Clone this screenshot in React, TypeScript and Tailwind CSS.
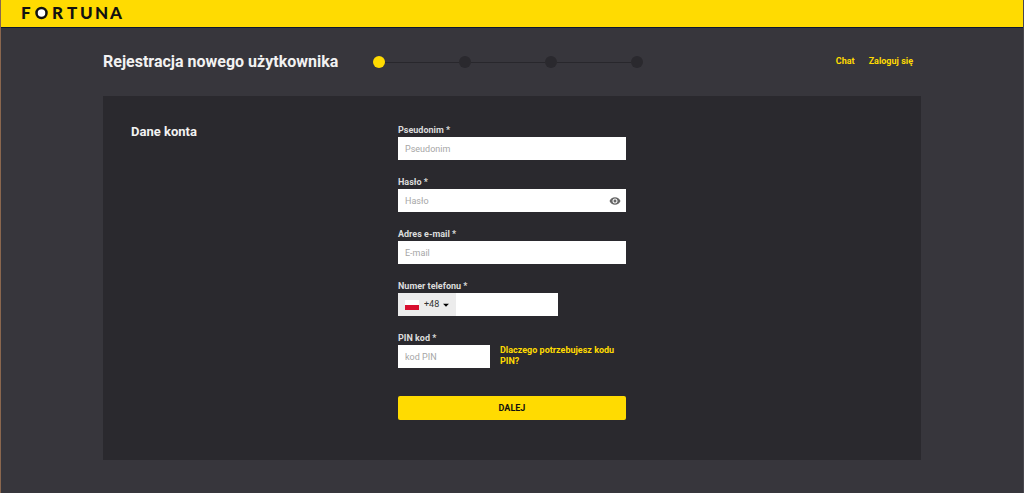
import { useState, type InputHTMLAttributes, type ReactNode } from 'react'
import { clsx } from 'clsx'
import { MdArrowDropDown, MdVisibility, MdVisibilityOff } from 'react-icons/md'

const STEPS = ['Dane konta', 'Dane osobowe', 'Adres', 'Podsumowanie']

const LETTERS = [
  { char: 'F', x: 20 },
  { char: 'R', x: 51 },
  { char: 'T', x: 66 },
  { char: 'U', x: 79 },
  { char: 'N', x: 94 },
  { char: 'A', x: 109 },
]

export default function App() {
  return (
    <div className="min-h-screen border-l border-r border-l-[#8a674e] border-r-[#47464d] bg-[#37363c] font-['Roboto','Liberation_Sans',sans-serif] text-[#f2f2f2]">
      <header className="flex h-7 border-b border-[#0c1730] bg-[#ffdb01]">
        <a href="#" aria-label="Fortuna">
          <Logo />
        </a>
      </header>

      <div className="mx-auto max-w-[818px]">
        <div className="flex h-17 items-center">
          <h1 className="w-[270px] shrink-0 text-base font-bold whitespace-nowrap">
            Rejestracja nowego użytkownika
          </h1>
          <Steps current={0} />
          <nav className="ml-auto flex gap-3.5 pr-2 text-[9px] font-bold text-[#ffdb01]">
            <a href="#chat">Chat</a>
            <a href="#login">Zaloguj się</a>
          </nav>
        </div>

        <main className="flex bg-[#2a292e] px-7 pt-7 pb-10">
          <h2 className="w-[267px] shrink-0 text-[13px] leading-4 font-bold">Dane konta</h2>
          <AccountForm />
        </main>
      </div>
    </div>
  )
}

function AccountForm() {
  const [showPassword, setShowPassword] = useState(false)
  const EyeIcon = showPassword ? MdVisibilityOff : MdVisibility

  return (
    <form className="flex w-[228px] flex-col gap-4" onSubmit={(e) => e.preventDefault()}>
      <Field id="nickname" label="Pseudonim *">
        <TextInput id="nickname" placeholder="Pseudonim" />
      </Field>

      <Field id="password" label="Hasło *">
        <div className="flex bg-white">
          <TextInput id="password" type={showPassword ? 'text' : 'password'} placeholder="Hasło" />
          <button
            type="button"
            aria-label="Pokaż hasło"
            aria-pressed={showPassword}
            onClick={() => setShowPassword((v) => !v)}
            className="px-[5px] text-[#666]"
          >
            <EyeIcon size={12} />
          </button>
        </div>
      </Field>

      <Field id="email" label="Adres e-mail *">
        <TextInput id="email" type="email" placeholder="E-mail" />
      </Field>

      <Field id="phone" label="Numer telefonu *">
        <div className="flex w-40">
          <div className="relative flex w-[58px] shrink-0 items-center bg-[#ececec] pl-[7px] text-[#333]">
            <PolishFlag />
            <select
              aria-label="Numer kierunkowy"
              className="absolute inset-0 w-full appearance-none pl-[26px] text-[9px] outline-none"
            >
              <option>+48</option>
            </select>
            <MdArrowDropDown size={14} className="pointer-events-none absolute right-[3px] text-black" />
          </div>
          <TextInput id="phone" type="tel" />
        </div>
      </Field>

      <Field id="pin" label="PIN kod *">
        <div className="flex gap-2.5">
          <div className="flex w-[92px] shrink-0">
            <TextInput id="pin" placeholder="kod PIN" />
          </div>
          <a href="#pin" className="text-[9px] leading-[11px] font-bold text-[#ffdb01]">
            Dlaczego potrzebujesz kodu PIN?
          </a>
        </div>
      </Field>

      <button
        type="submit"
        className="mt-3 h-6 rounded-xs bg-[#ffdb01] pt-0.5 text-[9px] font-bold text-[#111]"
      >
        DALEJ
      </button>
    </form>
  )
}

function Field({ id, label, children }: { id: string; label: string; children: ReactNode }) {
  return (
    <div className="flex flex-col">
      <label htmlFor={id} className="text-[9px] leading-[13px] font-bold text-[#dcdcdc]">
        {label}
      </label>
      {children}
    </div>
  )
}

function TextInput(props: InputHTMLAttributes<HTMLInputElement>) {
  return (
    <input
      {...props}
      className="h-[23px] w-full min-w-0 bg-white px-[7px] text-[9px] text-[#333] outline-none placeholder:text-[#a6a6a6]"
    />
  )
}

function Steps({ current }: { current: number }) {
  return (
    <ol className="flex items-center">
      {STEPS.map((step, i) => (
        <li key={step} aria-label={step} className="flex items-center">
          {i > 0 && <span className="h-px w-[74px] bg-[#28272c]" />}
          <span
            className={clsx('size-3 rounded-full', i === current ? 'bg-[#ffdb01]' : 'bg-[#2a292e]')}
          />
        </li>
      ))}
    </ol>
  )
}

function PolishFlag() {
  return (
    <svg width="14" height="10" viewBox="0 0 14 10" aria-hidden="true">
      <path fill="#fff" d="M0 0h14v5H0z" />
      <path fill="#d80f2f" d="M0 5h14v5H0z" />
    </svg>
  )
}

function Logo() {
  return (
    <svg width="130" height="27" viewBox="0 0 130 27" aria-hidden="true">
      {LETTERS.map(({ char, x }) => (
        <text
          key={char}
          x={x}
          y="19"
          className="fill-[#111] font-['Lato',sans-serif] text-[17px] font-black"
        >
          {char}
        </text>
      ))}
      <circle cx="40.5" cy="13" r="5" fill="#fff" stroke="#111" strokeWidth="2.5" />
    </svg>
  )
}
